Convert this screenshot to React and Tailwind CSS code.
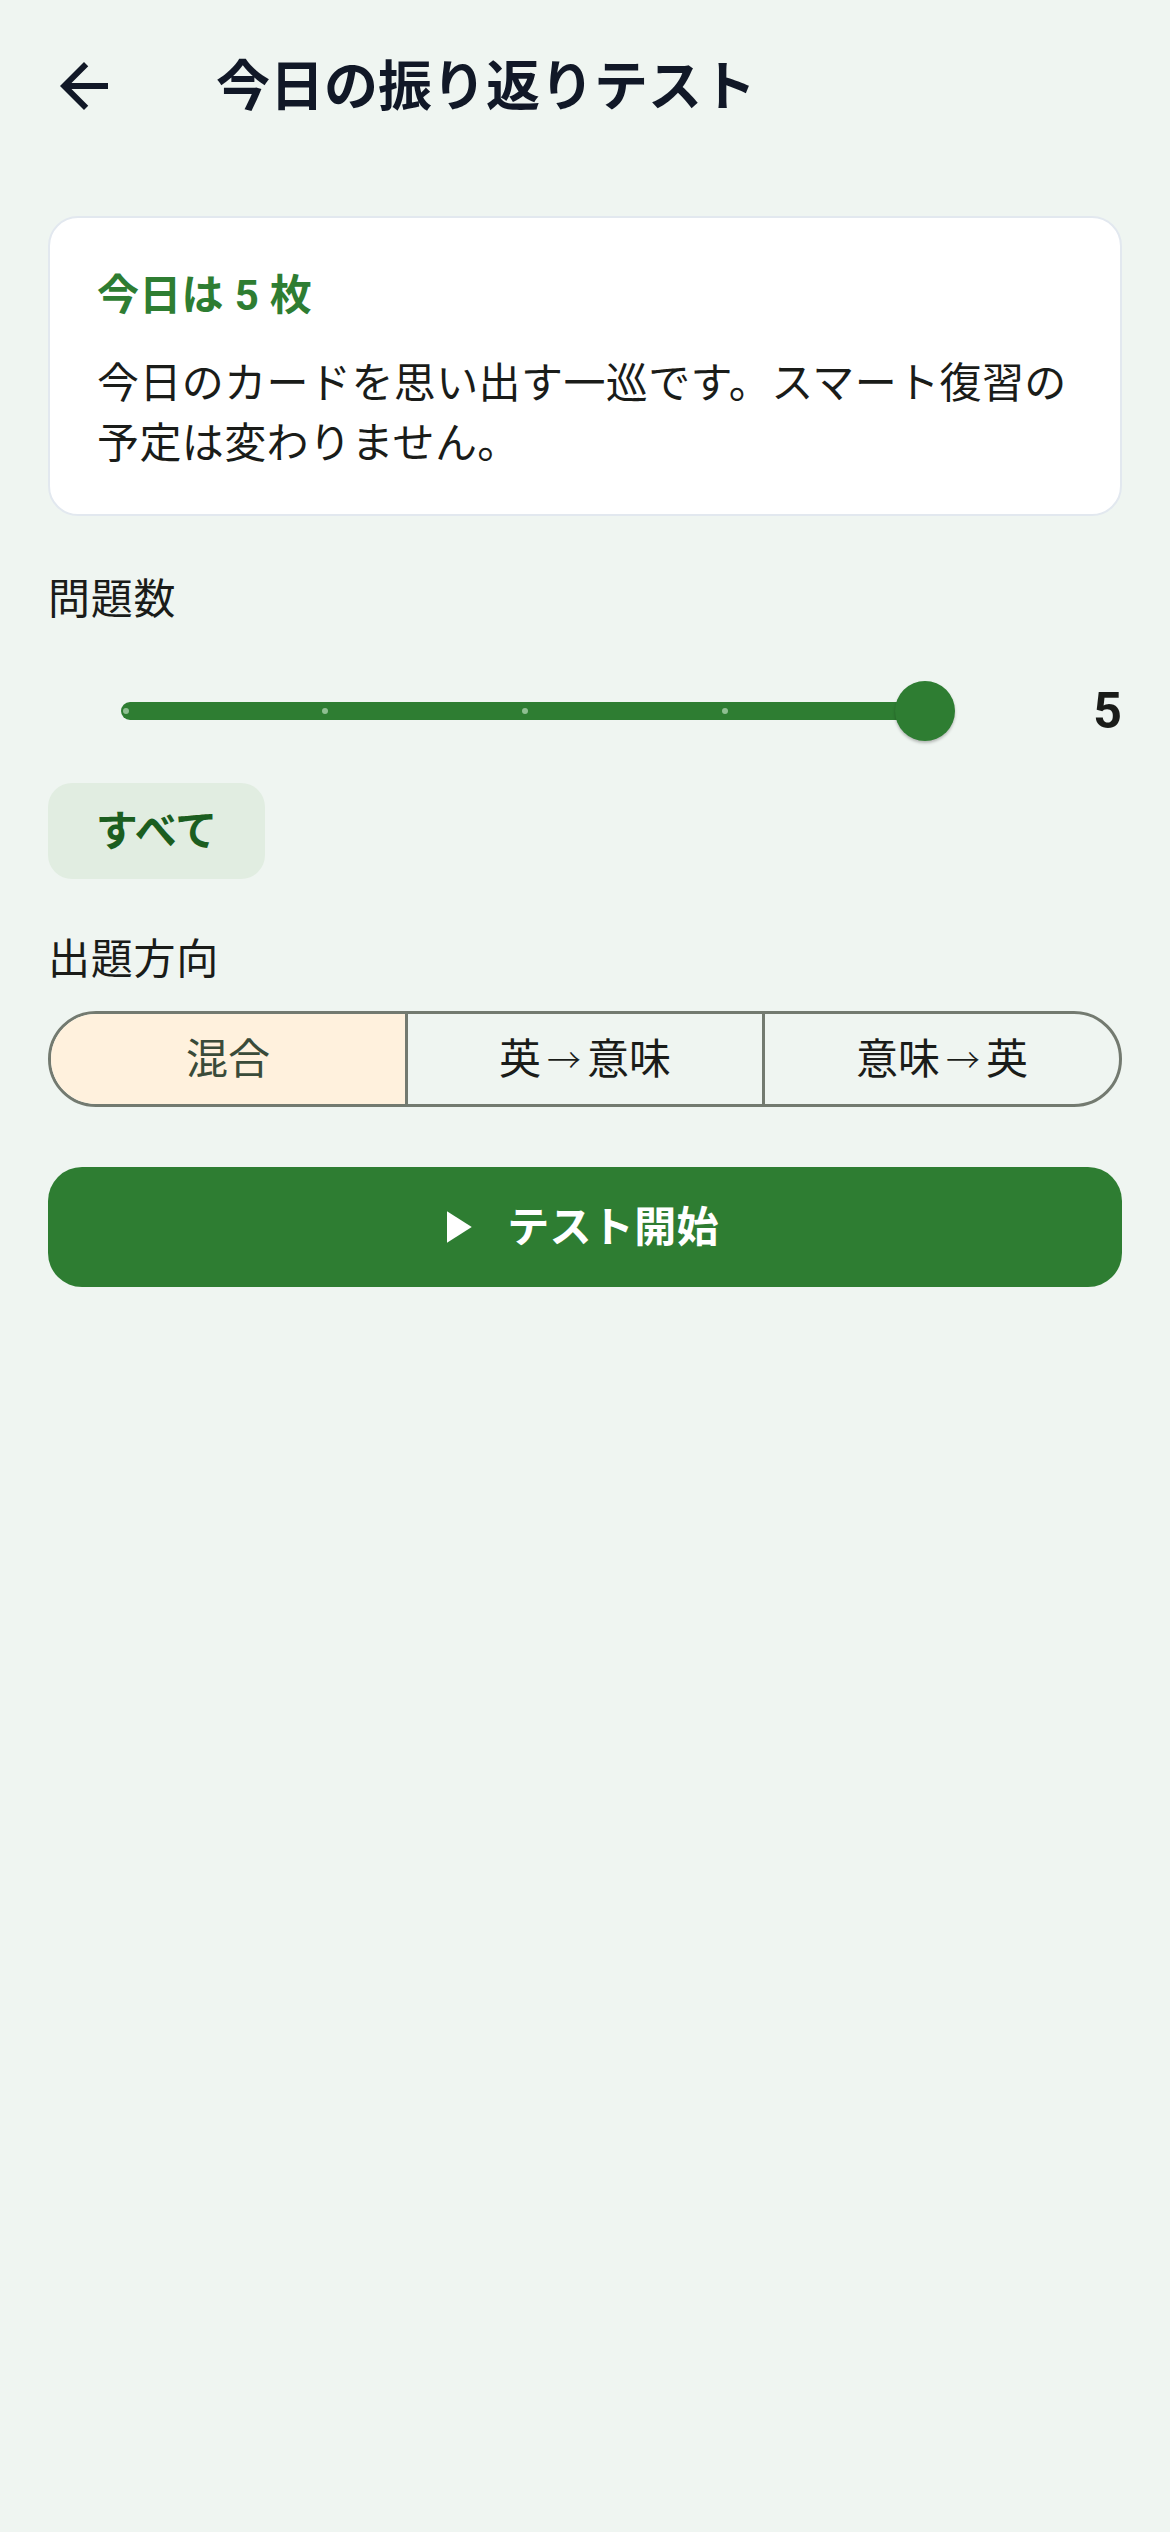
import React from "react";

const font = { fontFamily: '"Roboto", "Noto Sans CJK JP", "Noto Sans", sans-serif' };

function Arrow() {
  return <span className="mx-[6px] inline-block translate-y-[2px] text-[34px] font-light">→</span>;
}

export default function App() {
  return (
    <div className="min-h-[2532px] w-[1170px] bg-[#eff5f1] text-[#1a1c19]" style={font}>
      {/* Header */}
      <div className="flex h-[172px] items-center pl-[48px]">
        <button className="flex h-[72px] w-[72px] items-center justify-center">
          <svg width="72" height="72" viewBox="0 0 24 24" fill="#111827">
            <path d="M20 11H7.83l5.59-5.59L12 4l-8 8 8 8 1.41-1.41L7.83 13H20v-2z" />
          </svg>
        </button>
        <h1 className="ml-[96px] mt-[4px] text-[54px] font-bold leading-[64px] text-[#111827]">
          今日の振り返りテスト
        </h1>
      </div>

      <div className="flex flex-col px-[48px]">
        {/* Card */}
        <div className="mt-[44px] rounded-[30px] border-2 border-[#e2e8ef] bg-white pb-[40px] pl-[47px] pr-[40px] pt-[50px]">
          <div className="text-[42px] font-bold leading-[56px] tracking-[0.3px] text-[#2e7d32]">
            今日は 5 枚
          </div>
          <p className="mt-[30px] text-[42px] leading-[60px] tracking-[0.4px] text-[#1a1c19]">
            今日のカードを思い出す一巡です。スマート復習の予定は変わりません。
          </p>
        </div>

        {/* 問題数 */}
        <div className="mt-[54px] text-[42px] leading-[60px] tracking-[0.75px]">問題数</div>

        <div className="mt-[51px] flex h-[60px] items-center">
          <div className="relative ml-[73px] h-[60px] w-[804px]">
            <div className="absolute left-0 right-0 top-[21px] h-[18px] rounded-full bg-[#2e7d32]" />
            {[5, 204, 404, 604].map((x) => (
              <div
                key={x}
                className="absolute top-[27px] h-[6px] w-[6px] rounded-full bg-[#8fbf92]"
                style={{ left: x - 3 + "px" }}
              />
            ))}
            <div className="absolute right-[-30px] top-0 h-[60px] w-[60px] rounded-full bg-[#2e7d32] shadow-[0_2px_3px_rgba(0,0,0,0.25)]" />
          </div>
          <div className="flex-1 text-right text-[50px] font-bold leading-[60px] text-[#1a1c19]">5</div>
        </div>

        <div className="mt-[42px] flex h-[96px] w-[217px] items-center justify-center rounded-[24px] bg-[#e1ede1] text-[42px] font-bold text-[#1b5e20]">
          すべて
        </div>

        {/* 出題方向 */}
        <div className="mt-[51px] text-[42px] leading-[60px] tracking-[0.75px]">出題方向</div>

        <div className="mt-[21px] flex h-[96px] overflow-hidden rounded-full border-[3px] border-[#737a70]">
          <div className="flex flex-1 items-center justify-center bg-[#fff1dd] text-[42px] text-[#3a4b39]">
            混合
          </div>
          <div className="w-[3px] bg-[#737a70]" />
          <div className="flex flex-1 items-center justify-center text-[42px] text-[#1a1c19]">
            英<Arrow />意味
          </div>
          <div className="w-[3px] bg-[#737a70]" />
          <div className="flex flex-1 items-center justify-center text-[42px] text-[#1a1c19]">
            意味<Arrow />英
          </div>
        </div>

        {/* Start button */}
        <button className="mt-[60px] flex h-[120px] items-center justify-center rounded-[34px] bg-[#2e7d32] pr-[22px]">
          <svg width="54" height="54" viewBox="0 0 24 24" fill="#ffffff">
            <path d="M8 5v14l11-7z" />
          </svg>
          <span className="ml-[24px] text-[42px] font-bold tracking-[0.3px] text-white">テスト開始</span>
        </button>
      </div>
    </div>
  );
}
